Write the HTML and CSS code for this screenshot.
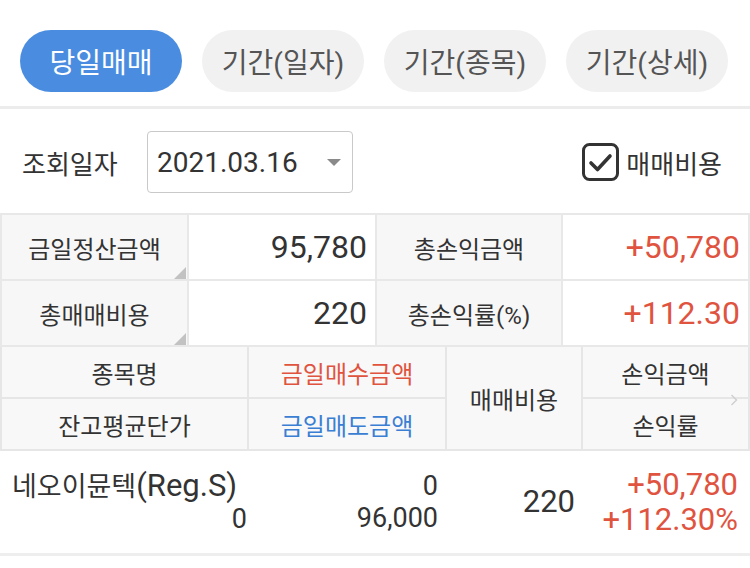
FILE: index.html
```html
<!DOCTYPE html>
<html lang="ko">
<head>
<meta charset="utf-8">
<title>당일매매</title>
<link rel="stylesheet" href="styles.css">
</head>
<body>
<div class="tabs">
  <div class="tab active">당일매매</div>
  <div class="tab">기간(일자)</div>
  <div class="tab">기간(종목)</div>
  <div class="tab">기간(상세)</div>
</div>
<div class="divider"></div>

<div class="query">
  <span class="q-label">조회일자</span>
  <div class="select"><span class="date">2021.03.16</span><span class="caret"></span></div>
  <div class="check">
    <span class="box">
      <svg width="37" height="38" viewBox="0 0 37 38"><rect x="1.5" y="1.5" width="34" height="35" rx="6" ry="6" fill="none" stroke="#333" stroke-width="3"/><polyline points="9,20 15.5,26.5 28,13" fill="none" stroke="#333" stroke-width="3.6" stroke-linecap="round" stroke-linejoin="round"/></svg>
    </span>
    <span class="check-label">매매비용</span>
  </div>
</div>

<div class="summary">
  <div class="lbl corner">금일정산금액</div>
  <div class="val">95,780</div>
  <div class="lbl">총손익금액</div>
  <div class="val red">+50,780</div>
  <div class="lbl corner">총매매비용</div>
  <div class="val">220</div>
  <div class="lbl">총손익률(%)</div>
  <div class="val red">+112.30</div>
</div>

<div class="head">
  <div class="h">종목명</div>
  <div class="h red">금일매수금액</div>
  <div class="h fee">매매비용</div>
  <div class="h">손익금액</div>
  <div class="h">잔고평균단가</div>
  <div class="h blue">금일매도금액</div>
  <div class="h">손익률</div>
  <svg class="chev" width="8" height="12" viewBox="0 0 8 12"><polyline points="1.5,1 6.5,6 1.5,11" fill="none" stroke="#cfcfcf" stroke-width="1.4"/></svg>
</div>

<div class="row">
  <div class="cell c1">
    <div class="name">네오이뮨텍<span class="latin">(Reg.S)</span></div>
    <div class="num right">0</div>
  </div>
  <div class="cell c2">
    <div class="num">0</div>
    <div class="num">96,000</div>
  </div>
  <div class="cell c3">220</div>
  <div class="cell c4 red">
    <div>+50,780</div>
    <div>+112.30%</div>
  </div>
</div>
</body>
</html>
```

FILE: styles.css
```css
html, body {
  margin: 0;
  padding: 0;
}
body {
  width: 750px;
  height: 568px;
  overflow: hidden;
  background: #ffffff;
  color: #333333;
  font-family: "Roboto", "Noto Sans CJK KR", sans-serif;
}

.tabs {
  display: flex;
  gap: 20px;
  padding: 30px 20px 0;
}
.tab {
  width: 162px;
  height: 62px;
  border-radius: 31px;
  background: #f1f1f1;
  color: #555555;
  font-size: 28px;
  display: flex;
  align-items: center;
  justify-content: center;
}
.tab.active {
  background: #4a8de0;
  color: #ffffff;
}
.divider {
  height: 3px;
  background: #ececec;
  margin-top: 14px;
}

.query {
  display: flex;
  align-items: center;
  height: 62px;
  padding: 22px 28px 0 22px;
}
.q-label {
  width: 125px;
  font-size: 26px;
  color: #333;
}
.select {
  box-sizing: border-box;
  width: 206px;
  height: 62px;
  border: 1.5px solid #c9c9c9;
  border-radius: 4px;
  display: flex;
  align-items: center;
  padding: 0 11px 0 9px;
}
.date {
  font-size: 28px;
  color: #333;
}
.caret {
  margin-left: auto;
  width: 0;
  height: 0;
  border-left: 7px solid transparent;
  border-right: 7px solid transparent;
  border-top: 7px solid #8a8a8a;
}
.check {
  margin-left: auto;
  display: flex;
  align-items: center;
  gap: 7px;
}
.box {
  display: flex;
}
.check-label {
  font-size: 26px;
  color: #333;
}

.summary {
  margin-top: 20px;
  display: grid;
  grid-template-columns: 185px 186px 184px 185px;
  grid-auto-rows: 64px;
  gap: 2px;
  padding: 2px;
  background: #e8e8e8;
}
.lbl {
  position: relative;
  background: #f7f7f7;
  display: flex;
  align-items: center;
  justify-content: center;
  font-size: 24px;
  color: #333;
}
.lbl.corner::after {
  content: "";
  position: absolute;
  right: 1px;
  bottom: 0;
  width: 0;
  height: 0;
  border-left: 12px solid transparent;
  border-bottom: 12px solid #c2c2c2;
}
.val {
  background: #ffffff;
  display: flex;
  align-items: center;
  justify-content: flex-end;
  padding-right: 8px;
  font-size: 32px;
  color: #333;
}
.red {
  color: #e0543f;
}
.val.red {
  color: #e0543f;
}
.blue {
  color: #3b7fd4;
}

.head {
  position: relative;
  display: grid;
  grid-template-columns: 245px 196px 134px 165px;
  grid-template-rows: 50px 50px;
  gap: 2px;
  padding: 0 2px 2px;
  background: #e6e6e6;
}
.h {
  background: #f8f8f8;
  display: flex;
  align-items: center;
  justify-content: center;
  font-size: 24px;
  color: #333;
}
.h.red {
  color: #e0543f;
}
.h.blue {
  color: #3b7fd4;
}
.h.fee {
  grid-column: 3;
  grid-row: 1 / 3;
}
.chev {
  position: absolute;
  right: 12px;
  top: 47px;
}

.row {
  display: grid;
  grid-template-columns: 245px 196px 134px 165px;
  column-gap: 2px;
  padding: 0 2px;
  height: 102px;
  border-bottom: 3px solid #eeeeee;
  align-items: center;
}
.cell {
  line-height: 32px;
}
.c1 .name {
  font-size: 27px;
  padding-left: 10px;
  white-space: nowrap;
}
.c1 .latin {
  font-size: 31px;
}
.num {
  font-size: 27px;
}
.right {
  text-align: right;
}
.c2 {
  text-align: right;
  padding-right: 7px;
}
.c3 {
  text-align: right;
  padding-right: 6px;
  font-size: 31px;
}
.c4 {
  text-align: right;
  padding-right: 10px;
  font-size: 31px;
  line-height: 35px;
}
```
